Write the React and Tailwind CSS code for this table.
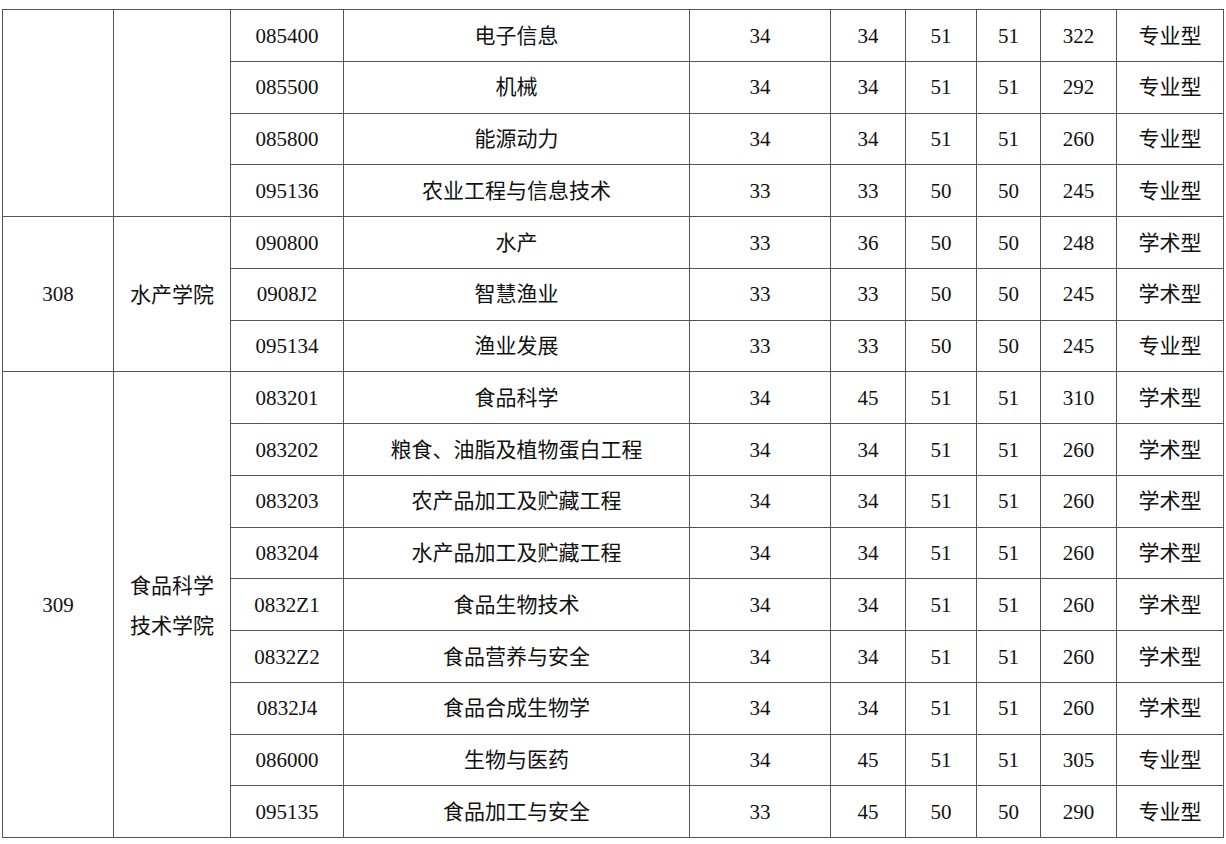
import React from "react"

const cols = [111, 117, 113, 346, 141, 75, 71, 64, 76, 107]

// 按学院分组
const groups = [
  {
    code: "",
    name: "",
    rows: [
      ["085400", "电子信息", "34", "34", "51", "51", "322", "专业型"],
      ["085500", "机械", "34", "34", "51", "51", "292", "专业型"],
      ["085800", "能源动力", "34", "34", "51", "51", "260", "专业型"],
      ["095136", "农业工程与信息技术", "33", "33", "50", "50", "245", "专业型"],
    ],
  },
  {
    code: "308",
    name: ["水产学院"],
    rows: [
      ["090800", "水产", "33", "36", "50", "50", "248", "学术型"],
      ["0908J2", "智慧渔业", "33", "33", "50", "50", "245", "学术型"],
      ["095134", "渔业发展", "33", "33", "50", "50", "245", "专业型"],
    ],
  },
  {
    code: "309",
    name: ["食品科学", "技术学院"],
    rows: [
      ["083201", "食品科学", "34", "45", "51", "51", "310", "学术型"],
      ["083202", "粮食、油脂及植物蛋白工程", "34", "34", "51", "51", "260", "学术型"],
      ["083203", "农产品加工及贮藏工程", "34", "34", "51", "51", "260", "学术型"],
      ["083204", "水产品加工及贮藏工程", "34", "34", "51", "51", "260", "学术型"],
      ["0832Z1", "食品生物技术", "34", "34", "51", "51", "260", "学术型"],
      ["0832Z2", "食品营养与安全", "34", "34", "51", "51", "260", "学术型"],
      ["0832J4", "食品合成生物学", "34", "34", "51", "51", "260", "学术型"],
      ["086000", "生物与医药", "34", "45", "51", "51", "305", "专业型"],
      ["095135", "食品加工与安全", "33", "45", "50", "50", "290", "专业型"],
    ],
  },
]

const cell = "border-[1.5px] border-[#555] text-center align-middle p-0 pt-[2px]"

export default function App() {
  return (
    <div className="w-[1226px] h-[844px] bg-white pt-[9px] pl-[2px] text-[#111] text-[21px]"
      style={{ fontFamily: '"Liberation Serif", "Noto Sans CJK SC", serif' }}>
      <table className="table-fixed border-collapse w-[1221px]">
        <colgroup>
          {cols.map((w, i) => <col key={i} style={{ width: w }} />)}
        </colgroup>
        <tbody>
          {groups.map((g, gi) =>
            g.rows.map((r, ri) => (
              <tr key={`${gi}-${ri}`} className="h-[51.75px]">
                {ri === 0 && (
                  <>
                    <td rowSpan={g.rows.length} className={cell}>{g.code}</td>
                    <td rowSpan={g.rows.length} className={`${cell} leading-[40px]`}>
                      {g.name && g.name.map((n, k) => <div key={k}>{n}</div>)}
                    </td>
                  </>
                )}
                {r.map((v, k) => (
                  <td key={k} className={cell}>{v}</td>
                ))}
              </tr>
            ))
          )}
        </tbody>
      </table>
    </div>
  )
}
